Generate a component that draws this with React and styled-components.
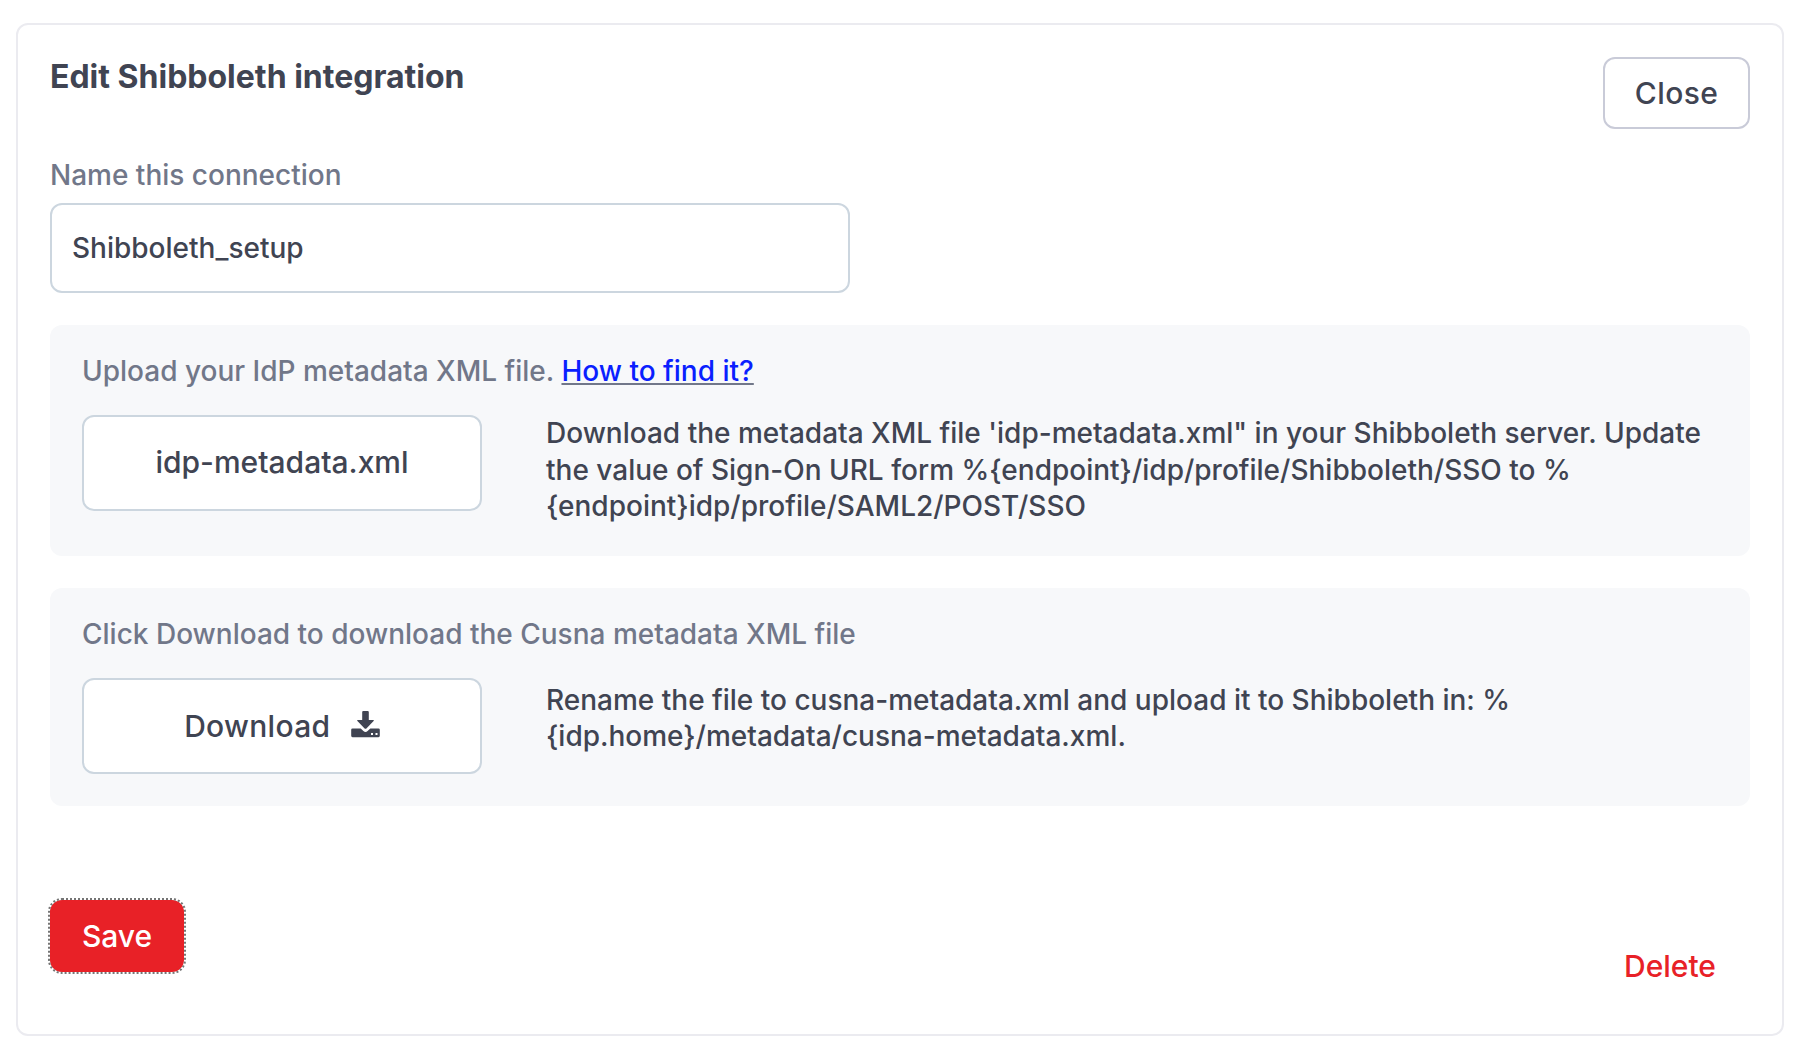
import React from "react";
import styled, { createGlobalStyle } from "styled-components";

const GlobalStyle = createGlobalStyle`
  * { box-sizing: border-box; }
  body { margin: 0; background: #fff; }
  body, button, input { font-family: Inter, "Liberation Sans", sans-serif; }
`;

const Page = styled.div`
  padding: 23px 14px 10px 16px;
  height: 1046px;
`;

const Card = styled.section`
  display: flex;
  flex-direction: column;
  height: 1013px;
  padding: 32px;
  border: 2px solid #ebebf0;
  border-radius: 12px;
  background: #fff;
  color: #404452;
`;

const Header = styled.header`
  display: flex;
  justify-content: space-between;
  align-items: flex-start;
  height: 100px;
`;

const Title = styled.h2`
  margin: 0;
  font-size: 32px;
  line-height: 39px;
  font-weight: 700;
  white-space: nowrap;
`;

const Button = styled.button`
  display: flex;
  align-items: center;
  justify-content: center;
  height: 72px;
  width: ${(p) => p.$width}px;
  padding: 0;
  border: 2px solid ${(p) => (p.$primary ? "#e82127" : "#c9cbd8")};
  border-radius: 12px;
  background: ${(p) => (p.$primary ? "#e82127" : "#fff")};
  color: ${(p) => (p.$primary ? "#fff" : "#404452")};
  font-size: 30px;
  font-weight: 500;
  letter-spacing: ${(p) => (p.$primary ? "0" : "0.4px")};
  outline: ${(p) => (p.$primary ? "2px dotted #757575" : "none")};
`;

const Label = styled.label`
  display: block;
  color: #717789;
  font-size: 28px;
  line-height: 36px;
  font-weight: 500;
  white-space: nowrap;
`;

const NameInput = styled.input`
  width: 800px;
  height: 90px;
  margin: 10px 0 32px;
  padding: 0 20px;
  border: 2px solid #ccd6df;
  border-radius: 12px;
  outline: none;
  color: #404452;
  font-size: 28px;
  font-weight: 500;
`;

const Panel = styled.section`
  height: ${(p) => p.$height}px;
  margin-bottom: 32px;
  padding: 28px 32px;
  border-radius: 12px;
  background: #f7f8fa;
`;

const PanelRow = styled.div`
  display: flex;
  align-items: flex-start;
  gap: 64px;
  margin-top: 26px;
`;

const FileButton = styled(Button)`
  flex: none;
  gap: 20.5px;
  width: 400px;
  height: 96px;
  padding-bottom: ${(p) => p.$lift || 0}px;
  border-color: #ccd6df;
  letter-spacing: ${(p) => p.$tracking || 0}px;
`;

const Link = styled.a`
  color: #0a1fff;
  text-decoration: underline 2px #717789;
  text-underline-offset: 2px;
`;

const Description = styled.p`
  margin: 0;
  padding-top: ${(p) => p.$top}px;
  font-size: 28px;
  line-height: 36.4px;
  font-weight: 500;
  white-space: pre;
`;

const Footer = styled.footer`
  display: flex;
  justify-content: space-between;
  align-items: flex-start;
  margin-top: 62px;
`;

const DeleteButton = styled.button`
  margin: 48px 34px 0 0;
  padding: 0;
  border: 0;
  background: none;
  color: #e82127;
  font-size: 30px;
  line-height: 37px;
  font-weight: 500;
`;

const IconSvg = styled.svg`
  display: block;
  flex: none;
  margin-bottom: 3px;
`;

const DownloadIcon = () => (
  <IconSvg width="29" height="27" viewBox="0 0 29 27" fill="#404452" aria-hidden="true">
    <path d="M12.300 0h4.400q1.100 0 1.100 1.100V9h4.300q1.500 0 .5 1.100l-7.200 7.300q-.9.900-1.800 0L6.400 10.100Q5.400 9 6.900 9h4.300V1.100q0-1.100 1.100-1.100Z" />
    <path fillRule="evenodd" d="M1.500 17.500h8.200l2.700 2.500q2.100 2 4.200 0l2.700-2.500h8.200q1.300 0 1.300 1.300v6q0 1.400-1.300 1.400h-26Q.2 26.200.2 24.800v-6q0-1.300 1.300-1.300ZM20 22h2v2h-2Zm4.500 0h2v2h-2Z" />
  </IconSvg>
);

export default function App() {
  return (
    <>
      <GlobalStyle />
      <Page>
        <Card>
          <Header>
            <Title>Edit Shibboleth integration</Title>
            <Button $width={147}>Close</Button>
          </Header>
          <Label htmlFor="connection">Name this connection</Label>
          <NameInput id="connection" defaultValue="Shibboleth_setup" />
          <Panel $height={231}>
            <Label as="div">
              Upload your IdP metadata XML file. <Link>How to find it?</Link>
            </Label>
            <PanelRow>
              <FileButton $lift={2}>idp-metadata.xml</FileButton>
              <Description $top={0.4}>
                {"Download the metadata XML file 'idp-metadata.xml\" in your Shibboleth server. Update\nthe value of Sign-On URL form %{endpoint}/idp/profile/Shibboleth/SSO to %\n{endpoint}idp/profile/SAML2/POST/SSO"}
              </Description>
            </PanelRow>
          </Panel>
          <Panel $height={218}>
            <Label as="div">Click Download to download the Cusna metadata XML file</Label>
            <PanelRow>
              <FileButton $tracking={0.3}>
                Download <DownloadIcon />
              </FileButton>
              <Description $top={4}>
                {"Rename the file to cusna-metadata.xml and upload it to Shibboleth in: %\n{idp.home}/metadata/cusna-metadata.xml."}
              </Description>
            </PanelRow>
          </Panel>
          <Footer>
            <Button $primary $width={134}>Save</Button>
            <DeleteButton>Delete</DeleteButton>
          </Footer>
        </Card>
      </Page>
    </>
  );
}
